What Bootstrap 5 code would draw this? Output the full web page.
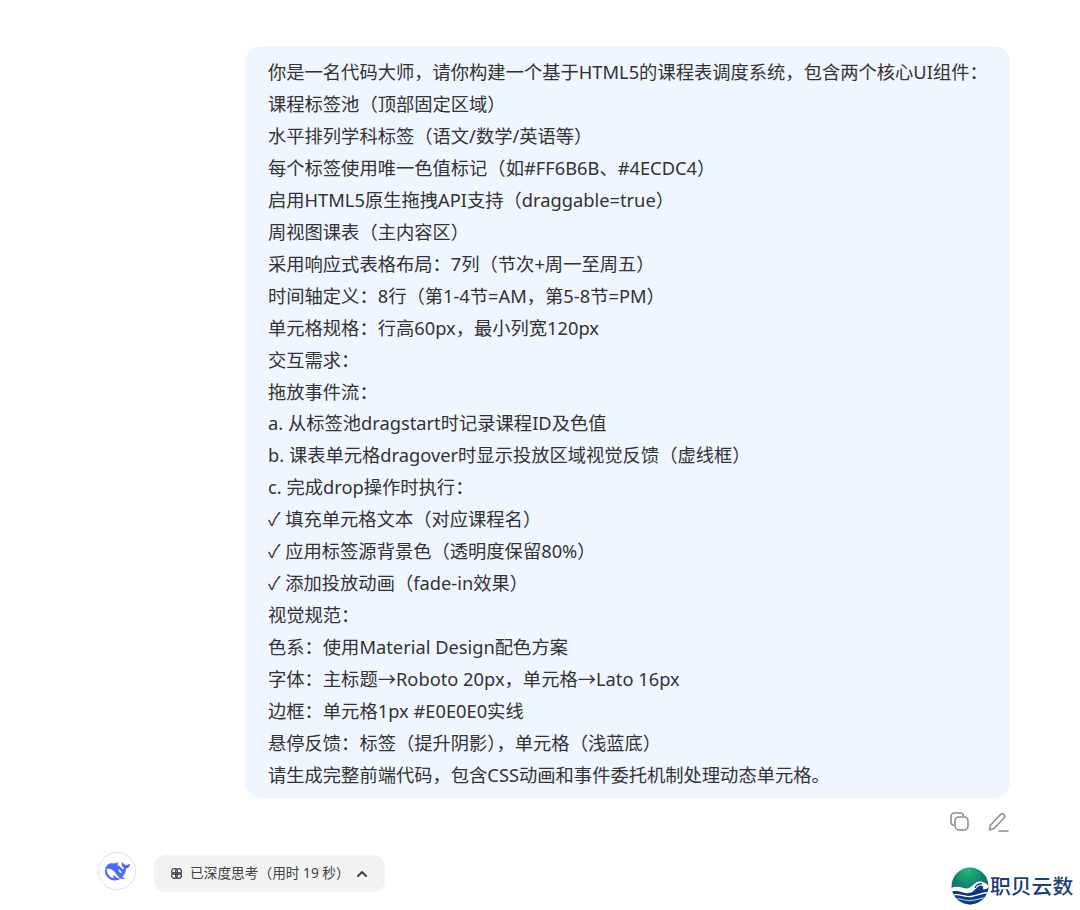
<!DOCTYPE html>
<html lang="zh-CN">
<head>
  <meta charset="UTF-8">
  <title>DeepSeek 对话</title>
  <link href="https://cdn.jsdelivr.net/npm/bootstrap@5.3.2/dist/css/bootstrap.min.css" rel="stylesheet">
  <style>
    body {
      font-family: "Noto Sans", "Noto Sans CJK SC", sans-serif;
      color: #333;
      background: #fff;
      overflow: hidden;
    }
    .chat-wrap { width: 1080px; height: 910px; padding: 46px 70px 0 98px; }
    .user-bubble {
      width: 765px;
      height: 752px;
      margin-left: 147px;
      padding: 10px 23px;
      background: #eff6ff;
      border-radius: 16px;
      font-size: 18.3px;
      line-height: 31.95px;
      white-space: nowrap;
    }
    .msg-actions { height: 48px; padding-right: 1px; gap: 16px; }
    .think-row { margin-top: 6px; }
    .ds-avatar {
      width: 38px; height: 38px;
      border: 1px solid #d5e4ff;
      border-radius: 50%;
    }
    .think-pill {
      width: 231px; height: 37px;
      margin-left: 18px;
      margin-top: 3px;
      background: #f3f3f4;
      border-radius: 12px;
      font-size: 13.7px;
      color: #404040;
      padding-left: 16px;
    }
    .think-label { margin-left: 7px; margin-right: 6px; }
    .brand-mark {
      left: 951px; top: 867px;
      font-size: 20.8px;
      line-height: 26px;
      color: #1c3f78;
      font-weight: 500;
    }
    .brand-name { margin-left: 1px; }
  </style>
</head>
<body>
<div class="chat-wrap">
  <div class="user-bubble">
    <div>你是一名代码大师，请你构建一个基于HTML5的课程表调度系统，包含两个核心UI组件：</div>
    <div>课程标签池（顶部固定区域）</div>
    <div>水平排列学科标签（语文/数学/英语等）</div>
    <div>每个标签使用唯一色值标记（如#FF6B6B、#4ECDC4）</div>
    <div>启用HTML5原生拖拽API支持（draggable=true）</div>
    <div>周视图课表（主内容区）</div>
    <div>采用响应式表格布局：7列（节次+周一至周五）</div>
    <div>时间轴定义：8行（第1-4节=AM，第5-8节=PM）</div>
    <div>单元格规格：行高60px，最小列宽120px</div>
    <div>交互需求：</div>
    <div>拖放事件流：</div>
    <div>a. 从标签池dragstart时记录课程ID及色值</div>
    <div>b. 课表单元格dragover时显示投放区域视觉反馈（虚线框）</div>
    <div>c. 完成drop操作时执行：</div>
    <div>✓ 填充单元格文本（对应课程名）</div>
    <div>✓ 应用标签源背景色（透明度保留80%）</div>
    <div>✓ 添加投放动画（fade-in效果）</div>
    <div>视觉规范：</div>
    <div>色系：使用Material Design配色方案</div>
    <div>字体：主标题→Roboto 20px，单元格→Lato 16px</div>
    <div>边框：单元格1px #E0E0E0实线</div>
    <div>悬停反馈：标签（提升阴影），单元格（浅蓝底）</div>
    <div>请生成完整前端代码，包含CSS动画和事件委托机制处理动态单元格。</div>
  </div>
  <div class="msg-actions d-flex justify-content-end align-items-center">
    <svg width="22" height="22" viewBox="0 0 22 22" fill="none" stroke="#8f8f8f" stroke-width="1.6"><path d="M5 14.500c-1.600-.2-3-1.400-3-3.200V5.500C2 3.500 3.500 2 5.500 2h5.800c1.700 0 3 1.300 3.200 3"/><rect x="6" y="6" width="13" height="13" rx="4"/></svg>
    <svg width="22" height="22" viewBox="0 0 22 22" fill="none" stroke="#8f8f8f" stroke-width="1.6" stroke-linejoin="round" stroke-linecap="round"><path d="M2.500 19l.8-4.500L13.500 3.500c1-1 2.500-1 3.500 0s1 2.500 0 3.500L7 17.500z"/><path d="M12 20h9"/></svg>
  </div>
  <div class="think-row d-flex align-items-start">
    <div class="ds-avatar d-flex align-items-center justify-content-center">
      <svg width="25" height="25" viewBox="0 0 24 24"><path fill="#4d6bfe" d="M23.748 4.482c-.254-.124-.364.113-.512.234-.051.039-.094.09-.137.136-.372.397-.806.657-1.373.626-.829-.046-1.537.214-2.163.848-.133-.782-.575-1.248-1.247-1.548-.352-.156-.708-.311-.955-.65-.172-.241-.219-.51-.305-.774-.055-.16-.11-.323-.293-.35-.2-.031-.278.136-.356.276-.313.572-.434 1.202-.422 1.84.027 1.436.633 2.58 1.838 3.393.137.093.172.187.129.323-.082.28-.18.552-.266.833-.055.179-.137.217-.329.14a5.526 5.526 0 01-1.736-1.18c-.857-.828-1.631-1.742-2.597-2.458a11.365 11.365 0 00-.689-.471c-.985-.957.13-1.743.388-1.836.27-.098.093-.432-.779-.428-.872.004-1.67.295-2.687.684a3.055 3.055 0 01-.465.137 9.597 9.597 0 00-2.883-.102c-1.885.21-3.39 1.102-4.497 2.623C.082 8.606-.231 10.684.152 12.850c.403 2.284 1.569 4.175 3.360 5.653 1.858 1.533 3.997 2.284 6.438 2.140 1.482-.085 3.133-.284 4.994-1.860.47.234.962.327 1.780.397.630.059 1.236-.030 1.705-.128.735-.156.684-.837.419-.961-2.155-1.004-1.682-.595-2.113-.926 1.096-1.296 2.746-2.642 3.392-7.003.050-.347.007-.565 0-.845-.004-.170.035-.237.230-.256a4.173 4.173 0 001.545-.475c1.396-.763 1.960-2.015 2.093-3.517.020-.230-.004-.467-.247-.588zM11.581 18c-2.089-1.642-3.102-2.183-3.520-2.160-.392.024-.321.471-.235.763.090.288.207.486.371.739.114.167.192.416-.113.603-.673.416-1.842-.140-1.897-.167-1.361-.802-2.500-1.860-3.301-3.307-.774-1.393-1.224-2.887-1.298-4.482-.020-.386.093-.522.477-.592a4.696 4.696 0 011.529-.039c2.132.312 3.946 1.265 5.468 2.774.868.860 1.525 1.887 2.202 2.891.720 1.066 1.494 2.082 2.480 2.914.348.292.625.514.891.677-.802.090-2.140.110-3.054-.614zm1-6.440a.306.306 0 01.415-.287.302.302 0 01.200.288.306.306 0 01-.310.307.303.303 0 01-.304-.308zm3.110 1.596c-.200.081-.399.151-.590.160a1.245 1.245 0 01-.798-.254c-.274-.230-.470-.358-.552-.758a1.730 1.730 0 01.016-.588c.070-.327-.008-.537-.239-.727-.187-.156-.426-.199-.688-.199a.559.559 0 01-.254-.078c-.110-.054-.200-.190-.114-.358.028-.054.160-.186.192-.210.356-.202.767-.136 1.146.016.352.144.618.408 1.001.782.391.451.462.576.685.914.176.265.336.537.445.848.067.195-.019.354-.250.452z"/></svg>
    </div>
    <div class="think-pill d-flex align-items-center">
      <svg width="13" height="13" viewBox="0 0 13 13" fill="none" stroke="#404040" stroke-width="1.200"><circle cx="4.500" cy="4.500" r="2.900"/><circle cx="8.500" cy="4.500" r="2.900"/><circle cx="4.500" cy="8.500" r="2.900"/><circle cx="8.500" cy="8.500" r="2.900"/></svg>
      <span class="think-label">已深度思考（用时 19 秒）</span>
      <svg width="12" height="8" viewBox="0 0 12 8" fill="none" stroke="#404040" stroke-width="2" stroke-linecap="round" stroke-linejoin="round"><path d="M2 6l4-4 4 4"/></svg>
    </div>
  </div>
</div>
<div class="brand-mark position-absolute d-flex align-items-center">
  <svg width="38" height="38" viewBox="0 0 38 38"><defs><radialGradient id="brandGrad" cx=".45" cy=".1" r=".9"><stop offset="0" stop-color="#26b57c"/><stop offset=".5" stop-color="#0c7f6c"/><stop offset="1" stop-color="#0d4f73"/></radialGradient><clipPath id="brandClip"><circle cx="19" cy="19" r="18.500"/></clipPath></defs><circle cx="19" cy="19" r="18.500" fill="url(#brandGrad)"/><g clip-path="url(#brandClip)"><path fill="#fff" d="M0 21c6-3 11 0 16 .5 5-.5 7-6 12-7 4-.5 8 2 10 5v19H0z"/><path fill="#12377f" d="M0 25c7-3 12 2 18 1s8-7 11-7.500c2.500-.5 4 1.500 3 4 2 0 4-1 6-2V38H0z"/><g fill="none" stroke-width="1.300"><path stroke="#fff" d="M0 28.500c8-3 13 2 20 1s12-4 18-4"/><path stroke="#7fc4c4" d="M0 32.500c8-3 13 2 20 1s12-3 18-3"/><path stroke="#12377f" d="M24 21c1-3 4-5 7-4"/></g></g></svg>
  <span class="brand-name">职贝云数</span>
</div>
</body>
</html>
